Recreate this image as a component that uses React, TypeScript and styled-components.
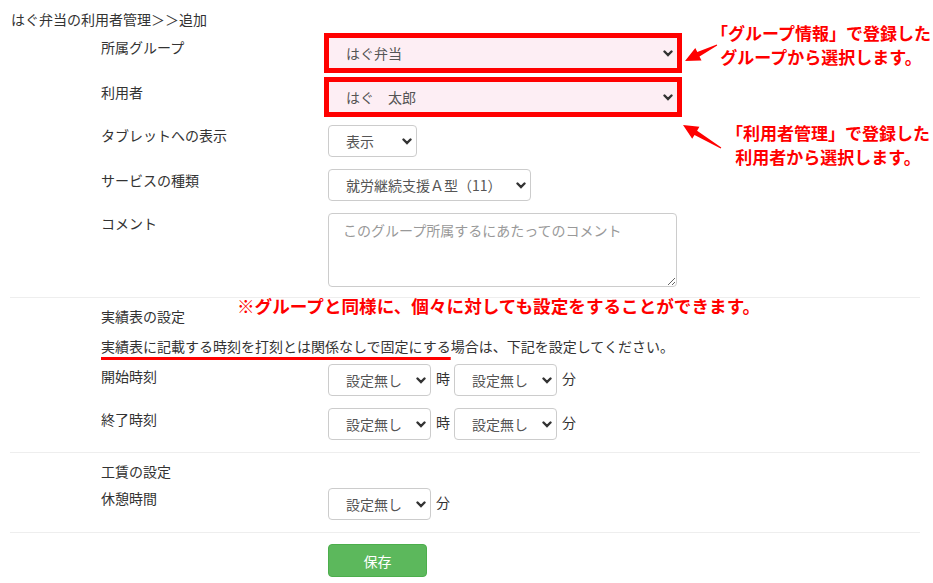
import React from 'react';
import styled, { createGlobalStyle } from 'styled-components';

const GlobalStyle = createGlobalStyle`
  body {
    margin: 0;
    background: #fff;
    color: #333;
    font-family: "Noto Sans CJK JP", "Noto Sans", sans-serif;
    font-size: 14px;
  }
`;

const Page = styled.div`
  position: relative;
  width: 933px;
  height: 583px;
  overflow: hidden;
  box-sizing: border-box;
  padding: 9px 13px 0 10px;
`;

const Title = styled.div`
  padding-left: 1px;
  line-height: 20px;
  margin-bottom: 8px;
`;

const Row = styled.div<{ $gap?: number }>`
  display: flex;
  align-items: flex-start;
  padding-left: 91px;
  margin-bottom: ${(p) => p.$gap ?? 12}px;
`;

const Label = styled.div<{ $offset?: number }>`
  width: 227px;
  flex: none;
  line-height: 20px;
  padding-top: ${(p) => p.$offset ?? 0}px;
`;

const Controls = styled.div`
  display: flex;
  align-items: flex-start;
`;

const Heading = styled.div<{ $top: number; $bottom: number }>`
  padding-left: 91px;
  line-height: 20px;
  margin-top: ${(p) => p.$top}px;
  margin-bottom: ${(p) => p.$bottom}px;
`;

const Marked = styled.span`
  text-decoration: underline;
  text-decoration-color: #ff0000;
  text-decoration-thickness: 3px;
  text-underline-offset: 5px;
`;

const Divider = styled.hr`
  border: 0;
  border-top: 1px solid #eee;
  margin: 0;
`;

const SelectBox = styled.div<{ $width: number }>`
  position: relative;
  width: ${(p) => p.$width}px;
  height: 32px;
  flex: none;
`;

const NativeSelect = styled.select<{ $highlight?: boolean }>`
  appearance: none;
  width: 100%;
  height: 100%;
  box-sizing: border-box;
  margin: 0;
  padding: 0 24px 0 17px;
  font-family: inherit;
  font-size: 14px;
  color: #555;
  background: ${(p) => (p.$highlight ? '#fdeef4' : '#fff')};
  border: 1px solid ${(p) => (p.$highlight ? '#ff0000' : '#ccc')};
  border-radius: ${(p) => (p.$highlight ? 0 : 4)}px;
  outline: ${(p) => (p.$highlight ? '4px solid #ff0000' : 'none')};
`;

const Chevron = styled.svg`
  position: absolute;
  right: 5px;
  top: 13px;
  width: 10px;
  height: 7px;
  pointer-events: none;
`;

const Unit = styled.span`
  line-height: 20px;
  padding-top: 4px;
  margin: 0 4px 0 5px;
`;

const Comment = styled.textarea`
  width: 349px;
  height: 74px;
  box-sizing: border-box;
  margin: 0;
  padding: 6px 14px;
  font-family: inherit;
  font-size: 14px;
  color: #555;
  border: 1px solid #ccc;
  border-radius: 4px;
  display: block;
  &::placeholder {
    color: #999;
  }
`;

const SaveButton = styled.button`
  width: 99px;
  height: 33px;
  border: 1px solid #4cae4c;
  border-radius: 4px;
  background: #5cb85c;
  color: #fff;
  font-family: inherit;
  font-size: 14px;
  cursor: pointer;
`;

const ButtonRow = styled.div`
  padding-left: 318px;
  margin-top: 11px;
`;

const Callout = styled.div<{ $left: number; $top: number; $width: number; $size: number; $align?: string }>`
  position: absolute;
  left: ${(p) => p.$left}px;
  top: ${(p) => p.$top}px;
  width: ${(p) => p.$width}px;
  text-align: ${(p) => p.$align ?? 'center'};
  color: #ff0000;
  font-weight: 700;
  font-size: ${(p) => p.$size}px;
  line-height: 24px;
  white-space: nowrap;
`;

const Overlay = styled.svg`
  position: absolute;
  inset: 0;
  pointer-events: none;
`;

function Select({ width, value, highlight }: { width: number; value: string; highlight?: boolean }) {
  return (
    <SelectBox $width={width}>
      <NativeSelect $highlight={highlight} defaultValue={value}>
        <option>{value}</option>
      </NativeSelect>
      <Chevron viewBox="0 0 10 7">
        <path d="M1.5 1.5 L5 5 L8.5 1.5" fill="none" stroke="#333" strokeWidth="2.4" strokeLinecap="round" />
      </Chevron>
    </SelectBox>
  );
}

function TimePair() {
  return (
    <Controls>
      <Select width={103} value="設定無し" />
      <Unit>時</Unit>
      <Select width={103} value="設定無し" />
      <Unit>分</Unit>
    </Controls>
  );
}

export default function App() {
  return (
    <>
      <GlobalStyle />
      <Page>
        <Title>はぐ弁当の利用者管理＞＞追加</Title>

        <Row>
          <Label $offset={0}>所属グループ</Label>
          <Select width={350} value="はぐ弁当" highlight />
        </Row>
        <Row>
          <Label $offset={1}>利用者</Label>
          <Select width={350} value="はぐ　太郎" highlight />
        </Row>
        <Row>
          <Label $offset={0}>タブレットへの表示</Label>
          <Select width={89} value="表示" />
        </Row>
        <Row>
          <Label $offset={1}>サービスの種類</Label>
          <Select width={203} value="就労継続支援Ａ型（11）" />
        </Row>
        <Row $gap={10}>
          <Label $offset={0}>コメント</Label>
          <Comment placeholder="このグループ所属するにあたってのコメント" />
        </Row>

        <Divider />
        <Heading $top={8} $bottom={10}>実績表の設定</Heading>
        <Heading $top={0} $bottom={8}>
          <Marked>実績表に記載する時刻を打刻とは関係なしで固定にする</Marked>場合は、下記を設定してください。
        </Heading>
        <Row>
          <Label $offset={2}>開始時刻</Label>
          <TimePair />
        </Row>
        <Row>
          <Label $offset={1}>終了時刻</Label>
          <TimePair />
        </Row>

        <Divider />
        <Heading $top={8} $bottom={7}>工賃の設定</Heading>
        <Row>
          <Label $offset={0}>休憩時間</Label>
          <Controls>
            <Select width={103} value="設定無し" />
            <Unit>分</Unit>
          </Controls>
        </Row>

        <Divider />
        <ButtonRow>
          <SaveButton>保存</SaveButton>
        </ButtonRow>

        <Callout $left={701} $top={21} $width={240} $size={17}>
          「グループ情報」で登録した
          <br />
          グループから選択します。
        </Callout>
        <Callout $left={708} $top={121} $width={240} $size={17}>
          「利用者管理」で登録した
          <br />
          利用者から選択します。
        </Callout>
        <Callout $left={237} $top={294} $width={540} $size={17.6} $align="left">
          ※グループと同様に、個々に対しても設定をすることができます。
        </Callout>

        <Overlay width="933" height="583" viewBox="0 0 933 583">
          <polygon
            fill="#ff0000"
            points="685,61 701.5,60.6 699.5,56.5 717.2,45.4 716.8,44.6 697.3,52.1 695.3,48"
          />
          <polygon
            fill="#ff0000"
            points="683,125 699.4,126.8 697.1,130.7 721.3,147.6 720.7,148.4 694.5,134.9 692.2,138.8"
          />
        </Overlay>
      </Page>
    </>
  );
}
